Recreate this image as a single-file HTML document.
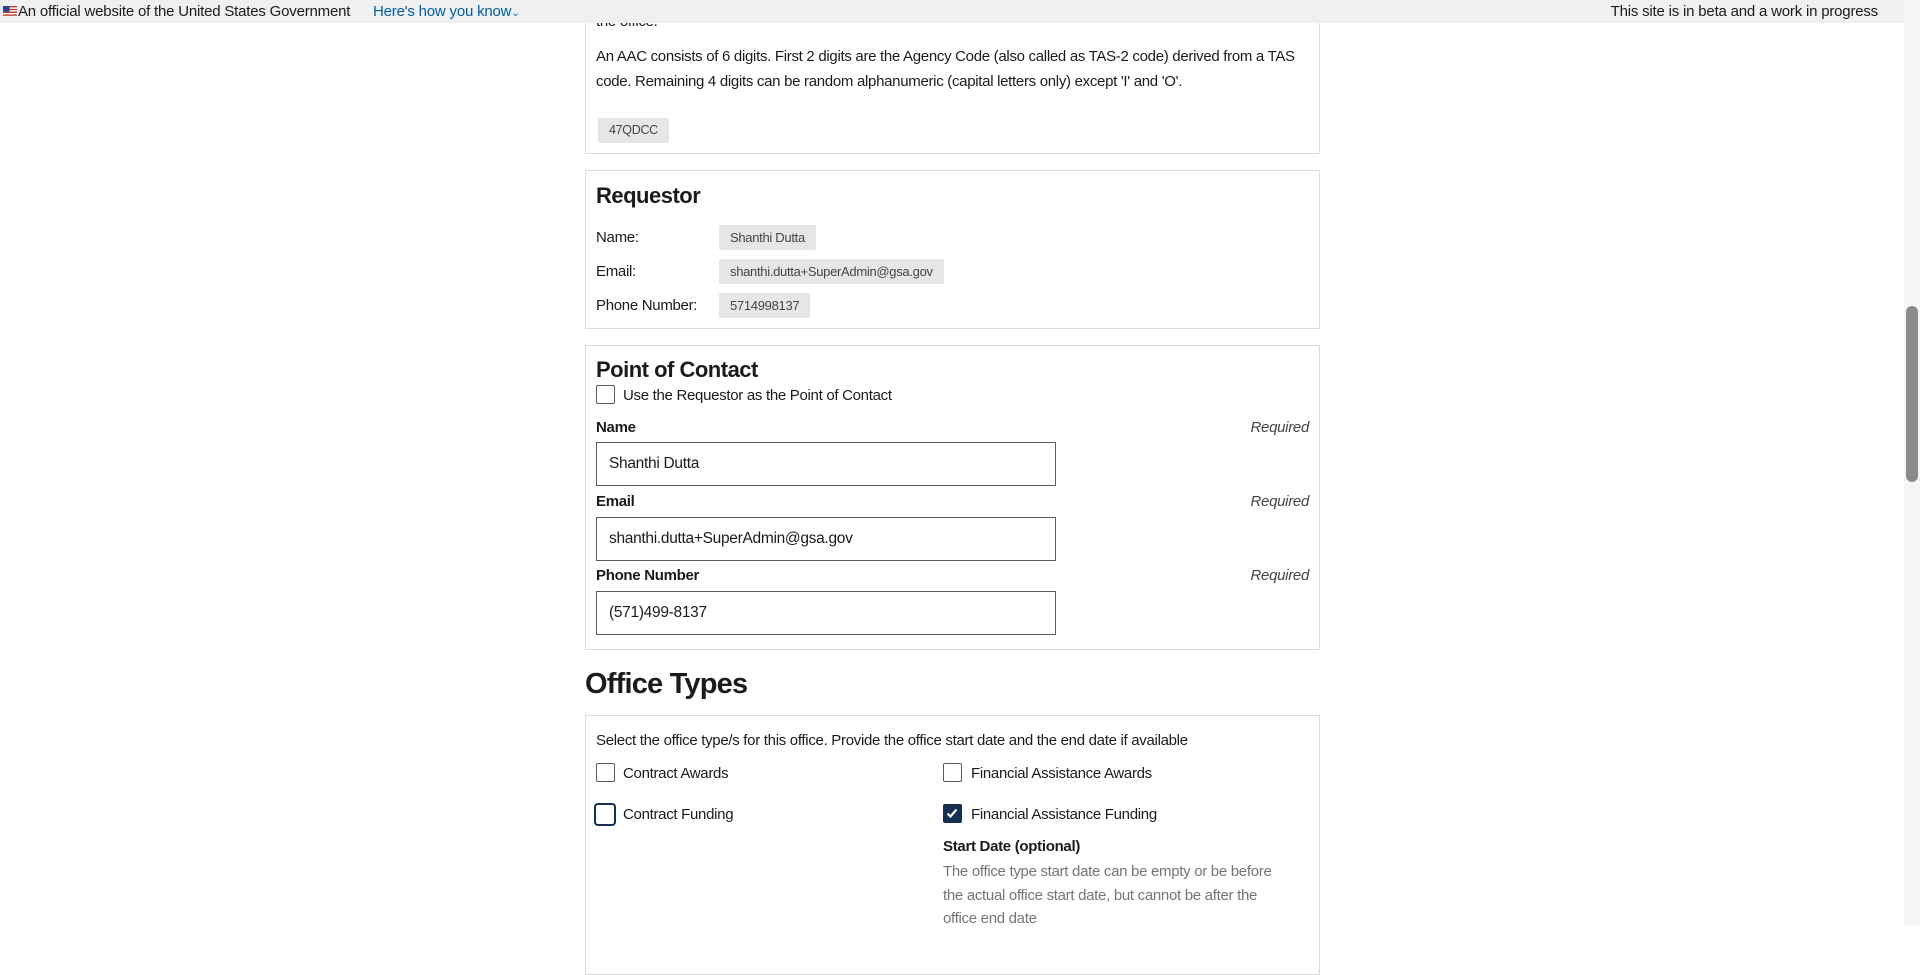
<!DOCTYPE html>
<html><head><meta charset="utf-8">
<style>
*{box-sizing:border-box;margin:0;padding:0}
body{width:1920px;height:925px;overflow:hidden;background:#fff;font-family:"Liberation Sans",sans-serif;color:#1b1b1b;position:relative;font-size:15px;letter-spacing:-0.3px}
.a{position:absolute;white-space:nowrap}
.banner{position:absolute;left:0;top:0;width:1904px;height:23px;background:#f0f0f0;z-index:2}
.box{position:absolute;left:585px;width:735px;border:1px solid #dcdcdc;background:#fff}
.tag{position:absolute;background:#e6e6e6;border-radius:2px;font-size:13px;color:#454545;padding:0 11px;height:25px;line-height:25px}
.cb{position:absolute;width:19px;height:19px;border:1.5px solid #565c65;border-radius:2px;background:#fff}
.inp{position:absolute;left:596px;width:460px;height:44px;border:1px solid #565c65;padding-left:12px;line-height:42px;font-size:15.5px}
.lab{font-weight:bold;font-size:15px}
.req{font-style:italic;color:#454545;right:611px}
</style></head><body>
<div class="banner">
 <svg class="a" style="left:3px;top:6px" width="14" height="10" viewBox="0 0 14 10"><rect width="14" height="10" fill="#fff"/><g fill="#c0392b"><rect y="0" width="14" height="1.4"/><rect y="2.8" width="14" height="1.4"/><rect y="5.6" width="14" height="1.4"/><rect y="8.4" width="14" height="1.4"/></g><rect width="6.5" height="5.6" fill="#2c3e8f"/></svg>
 <div class="a" style="left:18px;top:3px;font-size:15px;letter-spacing:-0.2px">An official website of the United States Government</div>
 <div class="a" style="left:373px;top:3px;font-size:15px;letter-spacing:-0.2px;color:#005ea2">Here's how you know<span style="font-size:10px">&#8964;</span></div>
 <div class="a" style="right:26px;top:3px;font-size:15px;letter-spacing:-0.2px">This site is in beta and a work in progress</div>
</div>
<div style="position:absolute;left:1904px;top:0;width:16px;height:925px;background:#f5f5f5"></div>
<div style="position:absolute;left:1906px;top:306px;width:12px;height:176px;background:#8a8a8a;border-radius:6px"></div>

<div class="box" style="top:-5px;height:159px"></div>
<div class="a" style="left:596px;top:13px">the office.</div>
<div class="a" style="left:596px;top:48px">An AAC consists of 6 digits. First 2 digits are the Agency Code (also called as TAS-2 code) derived from a TAS</div>
<div class="a" style="left:596px;top:73px">code. Remaining 4 digits can be random alphanumeric (capital letters only) except 'I' and 'O'.</div>
<div class="tag" style="left:598px;top:118px;font-size:12.5px">47QDCC</div>

<div class="box" style="top:170px;height:159px"></div>
<div class="a" style="left:596px;top:183px;font-size:22px;font-weight:bold;letter-spacing:-0.5px">Requestor</div>
<div class="a" style="left:596px;top:229px">Name:</div>
<div class="tag" style="left:719px;top:225px">Shanthi Dutta</div>
<div class="a" style="left:596px;top:263px">Email:</div>
<div class="tag" style="left:719px;top:259px">shanthi.dutta+SuperAdmin@gsa.gov</div>
<div class="a" style="left:596px;top:297px">Phone Number:</div>
<div class="tag" style="left:719px;top:293px">5714998137</div>

<div class="box" style="top:345px;height:305px"></div>
<div class="a" style="left:596px;top:357px;font-size:22px;font-weight:bold;letter-spacing:-0.5px">Point of Contact</div>
<div class="cb" style="left:596px;top:385px"></div>
<div class="a" style="left:623px;top:387px">Use the Requestor as the Point of Contact</div>
<div class="a lab" style="left:596px;top:419px">Name</div><div class="a req" style="top:419px">Required</div>
<div class="inp" style="top:442px">Shanthi Dutta</div>
<div class="a lab" style="left:596px;top:493px">Email</div><div class="a req" style="top:493px">Required</div>
<div class="inp" style="top:517px">shanthi.dutta+SuperAdmin@gsa.gov</div>
<div class="a lab" style="left:596px;top:567px">Phone Number</div><div class="a req" style="top:567px">Required</div>
<div class="inp" style="top:591px">(571)499-8137</div>

<div class="a" style="left:585px;top:668px;font-size:29px;font-weight:bold;letter-spacing:-0.8px">Office Types</div>
<div class="box" style="top:715px;height:260px"></div>
<div class="a" style="left:596px;top:732px">Select the office type/s for this office. Provide the office start date and the end date if available</div>
<div class="cb" style="left:596px;top:763px"></div>
<div class="a" style="left:623px;top:765px">Contract Awards</div>
<div class="cb" style="left:943px;top:763px"></div>
<div class="a" style="left:971px;top:765px">Financial Assistance Awards</div>
<div class="cb" style="left:594px;top:803px;width:22px;height:23px;border:2.5px solid #162e51;border-radius:4px"></div>
<div class="a" style="left:623px;top:806px">Contract Funding</div>
<div class="cb" style="left:943px;top:804px;background:#162e51;border-color:#162e51"><svg width="16" height="16" viewBox="0 0 16 16" style="position:absolute;left:0;top:0"><path d="M3.5 8.5l3 3 6-7" stroke="#fff" stroke-width="2.2" fill="none"/></svg></div>
<div class="a" style="left:971px;top:806px">Financial Assistance Funding</div>
<div class="a lab" style="left:943px;top:838px">Start Date (optional)</div>
<div class="a" style="left:943px;top:863px;color:#71767a">The office type start date can be empty or be before</div>
<div class="a" style="left:943px;top:887px;color:#71767a">the actual office start date, but cannot be after the</div>
<div class="a" style="left:943px;top:910px;color:#71767a">office end date</div>
</body></html>
